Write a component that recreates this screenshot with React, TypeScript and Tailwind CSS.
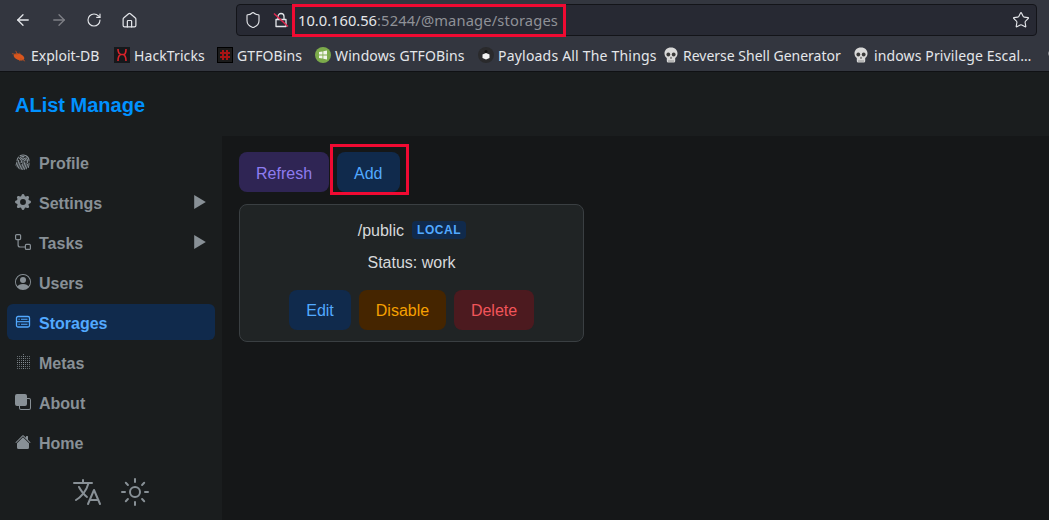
import { ArrowLeft, ArrowRight, RotateCw, Home, Shield, Star } from "lucide-react";
import { BsFingerprint, BsGearFill, BsPersonCircle, BsFront, BsHouseFill } from "react-icons/bs";
import { IoLanguageOutline, IoSunnyOutline } from "react-icons/io5";
import { ReactNode } from "react";

function Skull() {
  return (
    <svg viewBox="0 0 16 16" className="h-4 w-4 shrink-0">
      <path d="M8 0.5C3.8 0.5 1.5 3.2 1.5 6.6c0 2.2 1 3.6 2.3 4.4V14c0 .8.6 1.5 1.4 1.5h5.6c.8 0 1.4-.7 1.4-1.5v-3c1.3-.8 2.3-2.2 2.3-4.4C14.500 3.200 12.200 .5 8 .5z" fill="#d9d9d9" />
      <circle cx="5.3" cy="7.500" r="1.900" fill="#3a3a3a" />
      <circle cx="10.700" cy="7.500" r="1.900" fill="#3a3a3a" />
      <path d="M8 9.500l1 2H7z" fill="#3a3a3a" />
      <path d="M6 13v2.500M8 13v2.500M10 13v2.500" stroke="#777" strokeWidth=".7" />
    </svg>
  );
}

function Bookmark({ icon, label, className }: { icon: ReactNode; label: string; className: string }) {
  return (
    <div className={`flex shrink-0 items-center gap-[4px] ${className}`}>
      {icon}
      <span className="whitespace-nowrap">{label}</span>
    </div>
  );
}

function TasksIcon() {
  return (
    <svg viewBox="0 0 16 16" fill="none" stroke="currentColor" strokeWidth="1.200" className="h-4 w-4 shrink-0">
      <rect x="0.600" y="0.600" width="5" height="5" rx="1" />
      <rect x="10.400" y="10.400" width="5" height="5" rx="1" />
      <path d="M3.100 5.600v5.400c0 1.200.8 2 2 2h5.300" />
    </svg>
  );
}

function StorageIcon() {
  return (
    <svg viewBox="0 0 16 16" fill="none" stroke="currentColor" className="h-4 w-4 shrink-0">
      <rect x="1.500" y="2.500" width="13" height="10.500" rx="1.500" strokeWidth="1.300" />
      <path d="M1.500 7.700h13" strokeWidth="1.100" />
      <path d="M3.500 5.200h1.200M6 5.200h6.500M3.500 10.300h1.200M6 10.300h6.500" strokeWidth="1.100" />
    </svg>
  );
}

function MetasIcon() {
  const cells = [2, 4, 6, 8, 10, 12, 14];
  return (
    <svg viewBox="0 0 16 16" fill="currentColor" className="h-4 w-4 shrink-0">
      {cells.map((y) =>
        cells.map((x) => (
          <rect
            key={`${x}-${y}`}
            x={x}
            y={y}
            width="1"
            height="1"
            opacity={x === 8 || y === 8 ? 1 : 0.7}
          />
        ))
      )}
      <rect x="8" y="0" width="1" height="1" opacity="0.8" />
    </svg>
  );
}

const navItems = [
  { label: "Profile", icon: <BsFingerprint className="h-4 w-4 shrink-0" /> },
  { label: "Settings", icon: <BsGearFill className="h-4 w-4 shrink-0" />, arrow: true },
  { label: "Tasks", icon: <TasksIcon />, arrow: true },
  { label: "Users", icon: <BsPersonCircle className="h-4 w-4 shrink-0" /> },
  { label: "Storages", icon: <StorageIcon />, active: true },
  { label: "Metas", icon: <MetasIcon /> },
  { label: "About", icon: <BsFront className="h-4 w-4 shrink-0" /> },
  { label: "Home", icon: <BsHouseFill className="h-4 w-4 shrink-0" /> },
];

export default function App() {
  return (
    <div className="flex h-[520px] w-[1049px] flex-col overflow-hidden bg-[#151718] font-['Liberation_Sans',sans-serif]">
      {/* Browser chrome */}
      <div className="h-[72px] shrink-0 border-b border-[#101114] bg-[#33363f] font-['Noto_Sans',sans-serif] text-[#e4e6ea]">
        <div className="flex h-[37px] items-center pl-[14px] pr-[12px]">
          <div className="flex items-center pt-[3px]">
            <ArrowLeft className="h-[18px] w-[18px]" strokeWidth={1.700} />
            <ArrowRight className="ml-[18px] h-[18px] w-[18px] text-[#7f8087]" strokeWidth={1.700} />
            <RotateCw className="ml-[18px] h-[16px] w-[16px]" strokeWidth={1.700} />
            <Home className="ml-[19px] h-[17px] w-[17px]" strokeWidth={1.700} />
          </div>
          <div className="relative ml-[98px] mt-[2px] flex h-[32px] flex-1 items-center rounded-[4px] border border-[#131419] bg-[#272933] pl-[7px] pr-[6px] pt-[1px]">
            <Shield className="h-[18px] w-[18px]" strokeWidth={1.500} />
            <svg viewBox="0 0 16 16" fill="none" className="ml-[11px] h-4 w-4">
              <path d="M3 7.500h10v7H3z" stroke="#e4e6ea" strokeWidth="1.300" strokeLinejoin="round" />
              <path d="M5 7.500V4.500a3 3 0 0 1 6 0v3" stroke="#e4e6ea" strokeWidth="1.300" />
              <path d="M1 1.500l14 13" stroke="#e22850" strokeWidth="1.500" />
            </svg>
            <span className="ml-[9px] text-[14.700px] leading-none">
              10.0.160.56<span className="tracking-[0.14px] text-[#8f9197]">:5244/@manage/storages</span>
            </span>
            <Star className="ml-auto h-[18px] w-[18px]" strokeWidth={1.500} />
            {/* Red highlight over the address */}
            <div className="absolute left-[55px] top-[-1px] h-[33px] w-[274px] border-[3px] border-[#f00a32]" />
          </div>
        </div>
        <div className="flex h-[34px] items-center overflow-hidden pl-[11px] pt-[2px] text-[14px]">
          <Bookmark
            className="w-[103px]"
            label="Exploit-DB"
            icon={
              <svg viewBox="0 0 16 16" className="mr-[1px] h-[15px] w-[15px] shrink-0">
                <ellipse cx="8.500" cy="9.500" rx="6" ry="3.300" fill="#d9561e" transform="rotate(22 8.500 9.500)" />
                <path d="M1 6l5 1M5 3l2 4M9 5l1 2M15 14l-5-3M9 14l1-2" stroke="#b8501f" strokeWidth=".9" />
              </svg>
            }
          />
          <Bookmark
            className="w-[103px] tracking-[0.1px]"
            label="HackTricks"
            icon={
              <svg viewBox="0 0 16 16" className="h-4 w-4 shrink-0">
                <rect width="16" height="16" fill="#16181b" />
                <path d="M4 2c0 4 1 5 3 5.500h2c2 .5 3-1.500 3-5.500M4 14c0-4 1-6 3-6.500h2c2 .5 3 2.500 3 6.500" fill="none" stroke="#d8232a" strokeWidth="1.600" />
              </svg>
            }
          />
          <Bookmark
            className="w-[98px] tracking-[0.1px]"
            label="GTFOBins"
            icon={
              <svg viewBox="0 0 16 16" className="h-4 w-4 shrink-0">
                <rect x=".5" y=".5" width="15" height="15" fill="#1b1b1b" stroke="#000" />
                <path d="M6 3v10M10 3v10M3 6h10M3 10h10" stroke="#a81414" strokeWidth="2" />
              </svg>
            }
          />
          <Bookmark
            className="w-[163px] tracking-[0.12px]"
            label="Windows GTFOBins"
            icon={
              <svg viewBox="0 0 16 16" className="h-4 w-4 shrink-0">
                <circle cx="8" cy="8" r="8" fill="#7cab4b" />
                <path d="M4 5l3.500-.6v3.200H4zM8.300 4.200L12 3.600v4H8.300zM4 8.400h3.500v3.200L4 11zM8.300 8.400H12v4l-3.700-.6z" fill="#f1f5ea" />
              </svg>
            }
          />
          <Bookmark
            className="w-[185px] tracking-[0.2px]"
            label="Payloads All The Things"
            icon={
              <svg viewBox="0 0 16 16" className="h-4 w-4 shrink-0">
                <circle cx="8" cy="8" r="8" fill="#2a2a2c" />
                <circle cx="8" cy="4.500" r="1.500" fill="#111" />
                <path d="M4.500 7.500L8 6l3.500 1.500v3.500L8 12.500 4.500 11z" fill="#f2f2f2" />
              </svg>
            }
          />
          <Bookmark className="w-[190px]" label="Reverse Shell Generator" icon={<Skull />} />
          <Bookmark className="w-[194px] gap-[5px] tracking-[0.13px]" label="indows Privilege Escal…" icon={<Skull />} />
          <Skull />
        </div>
      </div>

      {/* Page */}
      <div className="flex h-[64px] shrink-0 items-center bg-[#1a1d1e] pl-[15px] pt-[2px] text-[20px] font-bold text-[#0091ff]">
        AList Manage
      </div>
      <div className="flex min-h-0 flex-1">
        <aside className="flex w-[222px] shrink-0 flex-col bg-[#1a1d1e] px-[7px] pt-[8px]">
          <nav className="flex flex-col gap-[4px]">
            {navItems.map((item) => (
              <div
                key={item.label}
                className={`flex h-[36px] items-center gap-[8px] rounded-[6px] pl-[8px] pr-[9px] text-[16px] font-bold ${
                  item.active ? "bg-[#102a4c] text-[#52a9ff]" : "text-[#889096]"
                }`}
              >
                {item.icon}
                <span className="pt-[4px]">{item.label}</span>
                {item.arrow && (
                  <svg viewBox="0 0 10 12" className="ml-auto h-[14px] w-[12px]" fill="currentColor">
                    <path d="M0 0l10 6-10 6z" />
                  </svg>
                )}
              </div>
            ))}
          </nav>
          <div className="mt-[16px] flex items-center justify-center gap-[16px] pr-[1px] text-[#889096]">
            <IoLanguageOutline className="h-[32px] w-[32px]" />
            <IoSunnyOutline className="h-[32px] w-[32px]" />
          </div>
        </aside>
        <main className="flex flex-1 flex-col items-start gap-[12px] p-[16px] pl-[17px]">
          <div className="flex gap-[8px]">
            <button className="h-[40px] rounded-[8px] bg-[#2f2554] px-[17px] pt-[4px] text-[16px] text-[#8e7cf0]">Refresh</button>
            <div className="relative">
              <button className="h-[40px] rounded-[8px] bg-[#102a4c] px-[17px] pt-[4px] text-[16px] text-[#52a9ff]">Add</button>
              <div className="absolute left-[-7px] top-[-8px] h-[51px] w-[79px] border-[3px] border-[#f00a32]" />
            </div>
          </div>
          <div className="flex h-[138px] w-[345px] flex-col items-center rounded-[8px] border border-[#3a3f42] bg-[#202425] pt-[13px] text-[16px] text-[#d7d9db]">
            <div className="flex h-[24px] items-center gap-[8px] pl-[1px]">
              <span className="pt-[2px]">/public</span>
              <span className="flex h-[18px] items-center rounded-[4px] bg-[#102a4c] px-[5px] text-[12px] font-bold tracking-[0.6px] text-[#52a9ff]">
                LOCAL
              </span>
            </div>
            <div className="mt-[9px] h-[24px] leading-[24px]">Status: work</div>
            <div className="mt-[15px] flex gap-[8px]">
              <button className="h-[40px] w-[62px] rounded-[8px] bg-[#102a4c] pt-[2px] text-[16px] text-[#52a9ff]">Edit</button>
              <button className="h-[40px] w-[87px] rounded-[8px] bg-[#452500] pt-[2px] text-[16px] text-[#f5a000]">Disable</button>
              <button className="h-[40px] w-[80px] rounded-[8px] bg-[#4c1a1f] pt-[2px] text-[16px] text-[#f2555a]">Delete</button>
            </div>
          </div>
        </main>
      </div>
    </div>
  );
}
